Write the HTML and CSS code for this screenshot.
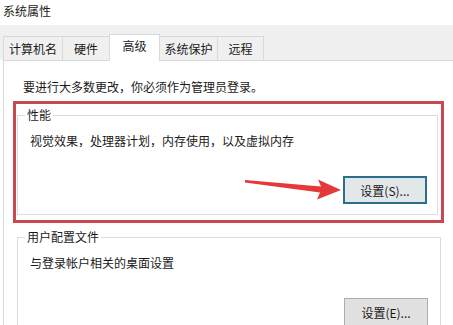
FILE: index.html
```html
<!DOCTYPE html>
<html lang="zh-CN">
<head>
    <meta charset="UTF-8">
    <title>系统属性</title>
    <link rel="stylesheet" href="styles.css">
</head>
<body>
    <div class="window">
        <div class="title">系统属性</div>
        <div class="tabs">
            <div class="tab tab-name">计算机名</div>
            <div class="tab tab-hw">硬件</div>
            <div class="tab tab-adv active">高级</div>
            <div class="tab tab-prot">系统保护</div>
            <div class="tab tab-remote">远程</div>
        </div>
        <div class="panel">
            <p class="note">要进行大多数更改，你必须作为管理员登录。</p>
            <div class="highlight">
                <fieldset class="group group-perf">
                    <legend>性能</legend>
                    <p class="desc">视觉效果，处理器计划，内存使用，以及虚拟内存</p>
                    <div class="actions">
                        <button class="btn focused">设置(S)...</button>
                    </div>
                </fieldset>
            </div>
            <fieldset class="group group-profile">
                <legend>用户配置文件</legend>
                <p class="desc">与登录帐户相关的桌面设置</p>
                <div class="actions">
                    <button class="btn">设置(E)...</button>
                </div>
            </fieldset>
        </div>
        <svg class="arrow" width="453" height="325" viewBox="0 0 453 325">
            <polygon points="245,180 321,186.5 318,179.5 341,190 317,199.5 320,192.5 245,182.5" fill="#e5383b"/>
        </svg>
    </div>
</body>
</html>
```
FILE: styles.css
```css
html, body {
    margin: 0;
    padding: 0;
    background: #ffffff;
}
body {
    font-family: "Noto Sans CJK SC", "Noto Sans", sans-serif;
    font-size: 12px;
    color: #1a1a1a;
    width: 453px;
    height: 325px;
    overflow: hidden;
}
.window {
    position: relative;
    height: 325px;
}
.title {
    height: 25px;
    line-height: 22px;
    padding-left: 3px;
    color: #222;
}
.tabs {
    display: flex;
    align-items: flex-end;
    height: 35px;
    padding-left: 3px;
    background: #f0f0f0;
    box-sizing: border-box;
}
.tab {
    height: 24px;
    line-height: 24px;
    text-align: center;
    box-sizing: border-box;
    border: 1px solid #d9d9d9;
    border-bottom: none;
    margin-right: -1px;
    background: #f0f0f0;
}
.tab-name { width: 60px; }
.tab-hw { width: 48px; }
.tab-adv { width: 51px; }
.tab-prot { width: 59px; }
.tab-remote { width: 47px; }
.tab.active {
    height: 27px;
    line-height: 22px;
    background: #ffffff;
    position: relative;
    z-index: 1;
    margin-bottom: -1px;
}
.panel {
    margin-left: 3px;
    border-top: 1px solid #d9d9d9;
    border-left: 1px solid #d9d9d9;
    height: 265px;
    box-sizing: border-box;
    background: #ffffff;
}
.note {
    margin: 18px 0 0 19px;
    line-height: 16px;
}
.highlight {
    margin: 6px 0 0 9px;
    width: 431px;
    height: 122px;
    box-sizing: border-box;
    border: 3px solid #c64a50;
}
.group {
    margin: 0;
    padding: 0 6px 10px;
    border: 1px solid #dcdcdc;
    box-sizing: border-box;
}
.group legend {
    padding: 0 2px;
    margin-left: 1px;
    line-height: 16px;
}
.group-perf {
    margin: 3px 3px 0 1px;
}
.group-profile {
    margin: 6px 0 0 13px;
    width: 424px;
}
.desc {
    margin: 10px 0 0 0;
    padding-left: 6px;
    line-height: 16px;
}
.actions {
    display: flex;
    justify-content: flex-end;
    margin-top: 27px;
    padding-right: 4px;
}
.btn {
    width: 84px;
    height: 28px;
    font-family: inherit;
    font-size: 12px;
    color: #1a1a1a;
    background: #e1e1e1;
    border: 1px solid #adadad;
    padding: 0;
}
.btn.focused {
    border: 2px solid #2d6f8b;
    background: #e2e7ea;
}
.group-profile .actions {
    padding-right: 6px;
}
.arrow {
    position: absolute;
    left: 0;
    top: 0;
    pointer-events: none;
}
```
